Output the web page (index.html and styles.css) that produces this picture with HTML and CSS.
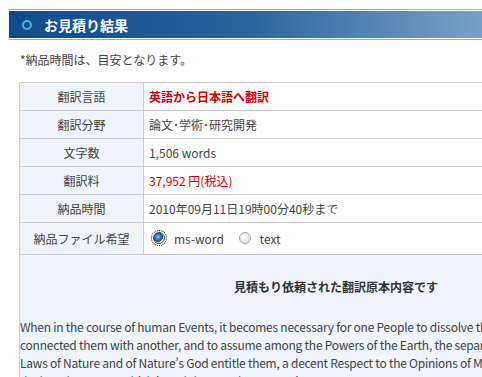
FILE: index.html
```html
<!DOCTYPE html>
<html lang="ja">
<head>
    <meta charset="UTF-8">
    <title>お見積り結果</title>
    <link rel="stylesheet" href="styles.css">
</head>
<body>

<div id="page">
    <div class="title-frame">
        <h2 class="title-bar">
            <span class="title-icon"></span>
            お見積り結果
        </h2>
    </div>

    <p class="note">*納品時間は、目安となります。</p>

    <table class="quote-table">
        <tr>
            <th>翻訳言語</th>
            <td class="lang">英語から日本語へ翻訳</td>
        </tr>
        <tr>
            <th>翻訳分野</th>
            <td>論文･学術･研究開発</td>
        </tr>
        <tr>
            <th>文字数</th>
            <td>1,506 words</td>
        </tr>
        <tr>
            <th>翻訳料</th>
            <td class="price">37,952 円(税込)</td>
        </tr>
        <tr>
            <th>納品時間</th>
            <td>2010年09月11日19時00分40秒まで</td>
        </tr>
        <tr class="file-row">
            <th>納品ファイル希望</th>
            <td>
                <label class="radio"><span class="radio-dot checked"></span>ms-word</label>
                <label class="radio"><span class="radio-dot"></span>text</label>
            </td>
        </tr>
        <tr>
            <td colspan="2" class="source">
                <h3>見積もり依頼された翻訳原本内容です</h3>
                <p>When in the course of human Events, it becomes necessary for one People to dissolve the Political Bands which have connected them with another, and to assume among the Powers of the Earth, the separate and equal Station to which the Laws of Nature and of Nature’s God entitle them, a decent Respect to the Opinions of Mankind requires that they should declare the causes which impel them to the Separation.</p>
            </td>
        </tr>
    </table>
</div>

</body>
</html>
```

FILE: styles.css
```css
body {
    font-family: "Noto Sans CJK JP", sans-serif;
    font-size: 12px;
    color: #444;
    margin: 0;
    padding: 0;
    overflow: hidden;
}

#page {
    padding: 9px 0 0 9px;
    width: 700px;
}

.title-frame {
    border-top: 1px solid #aaaaaa;
    border-bottom: 1px solid #aaaaaa;
    padding: 1px 0;
}

.title-bar {
    margin: 0;
    height: 27px;
    display: flex;
    align-items: center;
    background: linear-gradient(to right, #0f4a8a 0%, #2c66a0 35%, #7ea5c9 70%, #a9c5de 100%);
    color: #ffffff;
    font-size: 14px;
    font-weight: bold;
}

.title-icon {
    width: 6px;
    height: 6px;
    border: 2px solid #4fb3e6;
    border-radius: 50%;
    margin: 0 12px 0 13px;
}

.note {
    margin: 12px 0 0 11px;
    line-height: 16px;
}

.quote-table {
    margin: 14px 0 0 10px;
    border-collapse: collapse;
    width: 658px;
}

.quote-table th,
.quote-table td {
    border: 1px solid #cccccc;
    height: 27px;
    padding: 0 5px;
    text-align: left;
    font-weight: normal;
}

.quote-table th {
    width: 113px;
    text-align: center;
    background-color: #edf4fc;
}

.quote-table td.lang {
    color: #cc0000;
    font-weight: bold;
}

.quote-table td.price {
    color: #cc0000;
}

.file-row th,
.file-row td {
    height: 31px;
}

.radio {
    display: inline-flex;
    align-items: center;
    margin-right: 8px;
}

.radio-dot {
    width: 10px;
    height: 10px;
    border-radius: 50%;
    border: 1px solid #a8a8a8;
    background: radial-gradient(circle at 40% 40%, #ffffff, #d6d6d6);
    margin: 0 9px 0 4px;
}

.radio-dot.checked {
    background: radial-gradient(circle at 40% 40%, #8ac4ee 0, #1f6aab 40%, #1c4f80 55%, #e8e8e8 60%);
    border-color: #444;
    outline: 1px dotted #000;
    outline-offset: 1px;
}

.quote-table td.source {
    background-color: #eef5fd;
    padding: 0;
    height: auto;
}

.source h3 {
    margin: 24px 0 0 0;
    padding-right: 24px;
    text-align: center;
    font-size: 12px;
    font-weight: bold;
    color: #333;
    line-height: 16px;
}

.source p {
    margin: 23px 0 0 0;
    line-height: 18px;
    letter-spacing: -0.25px;
}
```
